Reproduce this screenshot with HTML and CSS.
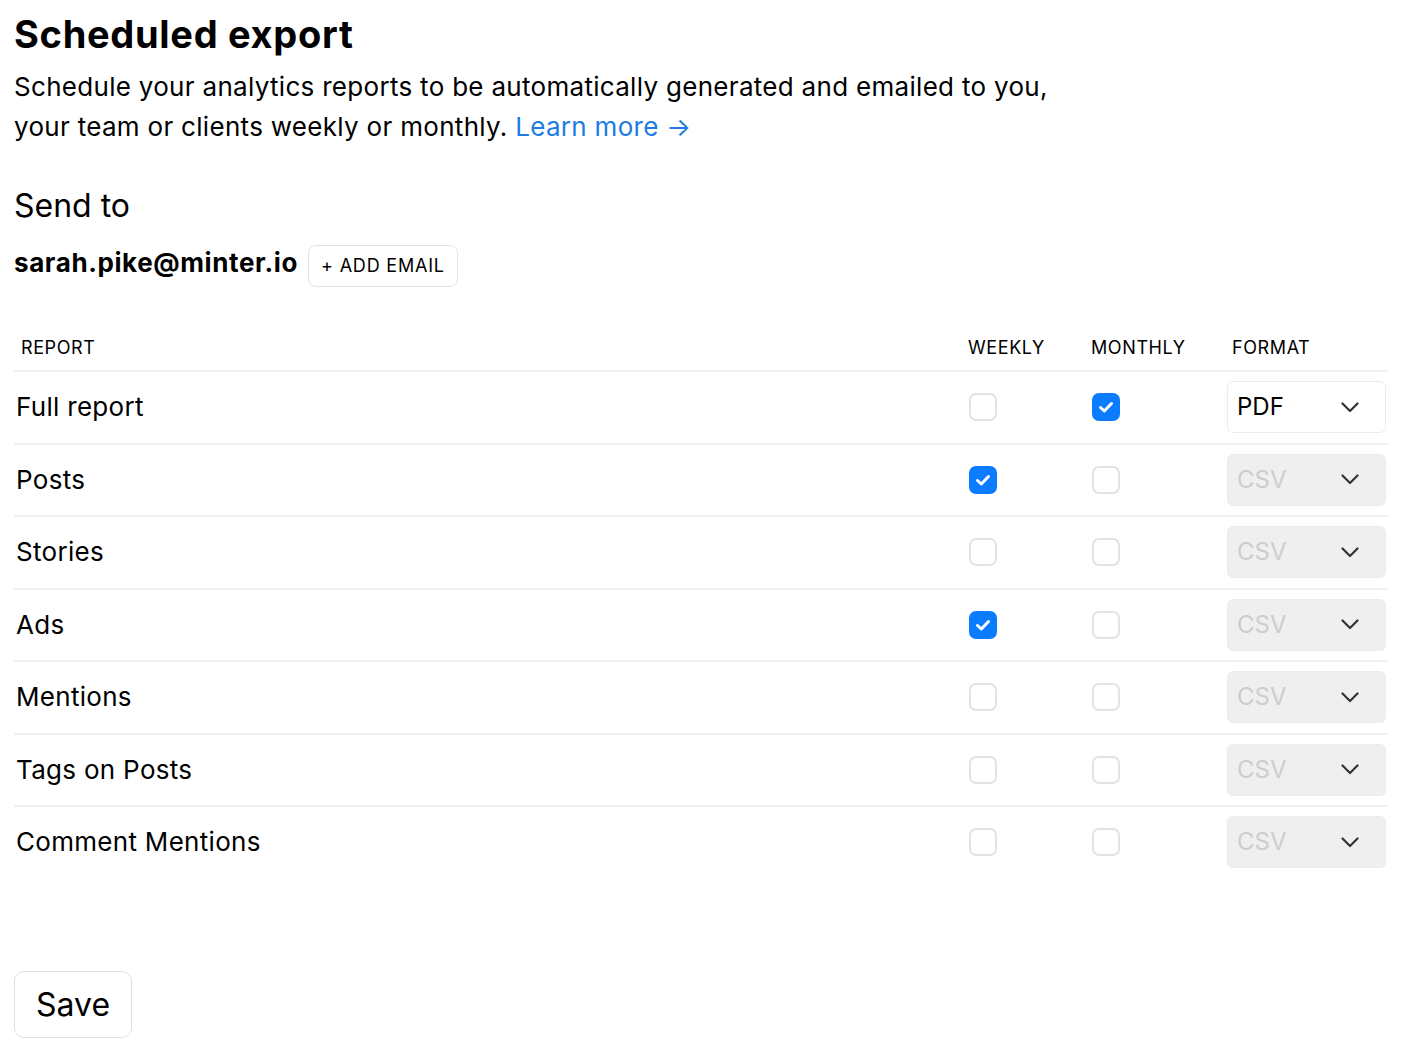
FILE: index.html
```html
<!DOCTYPE html>
<html lang="en">
<head>
  <meta charset="UTF-8" />
  <title>Scheduled export</title>
<link rel="stylesheet" href="styles.css">
</head>
<body>
  <main class="pagina">
    <h1>Scheduled export</h1>
    <p class="intro">Schedule your analytics reports to be automatically generated and emailed to you,<br>your team or clients weekly or monthly. <a href="#">Learn more &rarr;</a></p>

    <h2>Send to</h2>
    <div class="destinatarios">
      <span class="correo">sarah.pike@minter.io</span>
      <button class="btn-agregar">+ ADD EMAIL</button>
    </div>

    <section class="reportes">
      <div class="fila encabezado">
        <div class="col-reporte">Report</div>
        <div class="col-check">Weekly</div>
        <div class="col-check">Monthly</div>
        <div class="col-formato">Format</div>
      </div>
      <div id="filas"></div>
    </section>

    <button class="btn-guardar">Save</button>
  </main>

  <script>
  const reportes = [
    { nombre: "Full report", semanal: false, mensual: true, formato: "PDF" },
    { nombre: "Posts", semanal: true, mensual: false, formato: "CSV" },
    { nombre: "Stories", semanal: false, mensual: false, formato: "CSV" },
    { nombre: "Ads", semanal: true, mensual: false, formato: "CSV" },
    { nombre: "Mentions", semanal: false, mensual: false, formato: "CSV" },
    { nombre: "Tags on Posts", semanal: false, mensual: false, formato: "CSV" },
    { nombre: "Comment Mentions", semanal: false, mensual: false, formato: "CSV" }
  ];

  const contenedor = document.getElementById("filas");
  const chevron = '<svg width="18" height="11" viewBox="0 0 18 11"><polyline points="1.5,1.5 9,9 16.5,1.5" fill="none" stroke="#333" stroke-width="2.2" stroke-linecap="round" stroke-linejoin="round"/></svg>';
  const tick = '<svg width="16" height="12" viewBox="0 0 16 12"><polyline points="2.5,6.5 6.3,10 13.5,2.5" fill="none" stroke="#fff" stroke-width="3" stroke-linecap="round" stroke-linejoin="round"/></svg>';

  function casilla(marcada) {
    return `<span class="casilla${marcada ? " marcada" : ""}">${marcada ? tick : ""}</span>`;
  }

  reportes.forEach(r => {
    const fila = document.createElement("div");
    fila.className = "fila";
    // solo el reporte completo tiene el formato activo
    const desactivado = r.formato !== "PDF";
    fila.innerHTML = `
      <div class="col-reporte">${r.nombre}</div>
      <div class="col-check">${casilla(r.semanal)}</div>
      <div class="col-check">${casilla(r.mensual)}</div>
      <div class="col-formato">
        <div class="selector${desactivado ? " desactivado" : ""}"><span>${r.formato}</span>${chevron}</div>
      </div>`;
    contenedor.appendChild(fila);
  });
  </script>
</body>
</html>
```

FILE: styles.css
```css
body {
  font-family: 'Inter', 'Liberation Sans', sans-serif;
  margin: 0;
  padding: 0;
  background-color: #ffffff;
  color: #000000;
}

.pagina {
  padding: 12px 20px 0 14px;
}

h1 {
  margin: 0;
  font-size: 38px;
  line-height: 44px;
  font-weight: 700;
  letter-spacing: 0.7px;
}

.intro {
  margin: 11px 0 0;
  font-size: 26px;
  line-height: 40px;
  letter-spacing: 0.3px;
}

.intro a {
  color: #1d7ce4;
  text-decoration: none;
}

h2 {
  margin: 39px 0 0;
  font-size: 32px;
  line-height: 40px;
  font-weight: 400;
}

.destinatarios {
  display: flex;
  align-items: baseline;
  gap: 10px;
  margin-top: 19px;
}

.correo {
  font-size: 26px;
  font-weight: 700;
  line-height: 32px;
  letter-spacing: 0.6px;
}

.btn-agregar {
  font-family: inherit;
  font-size: 18px;
  line-height: 24px;
  letter-spacing: 0.8px;
  padding: 8px 12px;
  background-color: #ffffff;
  color: #000000;
  border: 1px solid #e2e2e2;
  border-radius: 8px;
}

.reportes {
  margin-top: 49px;
}

.fila {
  display: grid;
  grid-template-columns: 1fr 123px 142px 161px;
  align-items: center;
  height: 70.5px;
  border-bottom: 2px solid #f0f0f0;
  font-size: 26px;
  line-height: 32px;
  letter-spacing: 0.3px;
}

#filas .fila:last-child {
  border-bottom: none;
}

.fila .col-reporte {
  padding-left: 2px;
}

.encabezado {
  height: auto;
  padding-bottom: 10px;
  font-size: 18px;
  line-height: 24px;
  text-transform: uppercase;
  letter-spacing: 0.6px;
}

.encabezado .col-reporte {
  padding-left: 7px;
}

.encabezado .col-check {
  padding-left: 6px;
}

.encabezado .col-formato {
  padding-left: 5px;
}

.casilla {
  display: flex;
  align-items: center;
  justify-content: center;
  box-sizing: border-box;
  width: 28px;
  height: 28px;
  margin-left: 7px;
  border: 2px solid #e3e3e3;
  border-radius: 7px;
  background-color: #ffffff;
}

.casilla.marcada {
  background-color: #0b7bff;
  border-color: #0b7bff;
}

.selector {
  display: flex;
  align-items: center;
  justify-content: space-between;
  box-sizing: border-box;
  width: 159px;
  height: 52px;
  padding: 0 26px 0 9px;
  border: 1px solid #ececec;
  border-radius: 6px;
  font-size: 24px;
  letter-spacing: 0;
  background-color: #ffffff;
}

.selector.desactivado {
  background-color: #efefef;
  color: #cdcdcd;
}

.btn-guardar {
  margin-top: 93px;
  font-family: inherit;
  font-size: 32px;
  line-height: 41px;
  padding: 12px 21px;
  background-color: #ffffff;
  color: #000000;
  border: 1px solid #e0e0e0;
  border-radius: 10px;
}
```
